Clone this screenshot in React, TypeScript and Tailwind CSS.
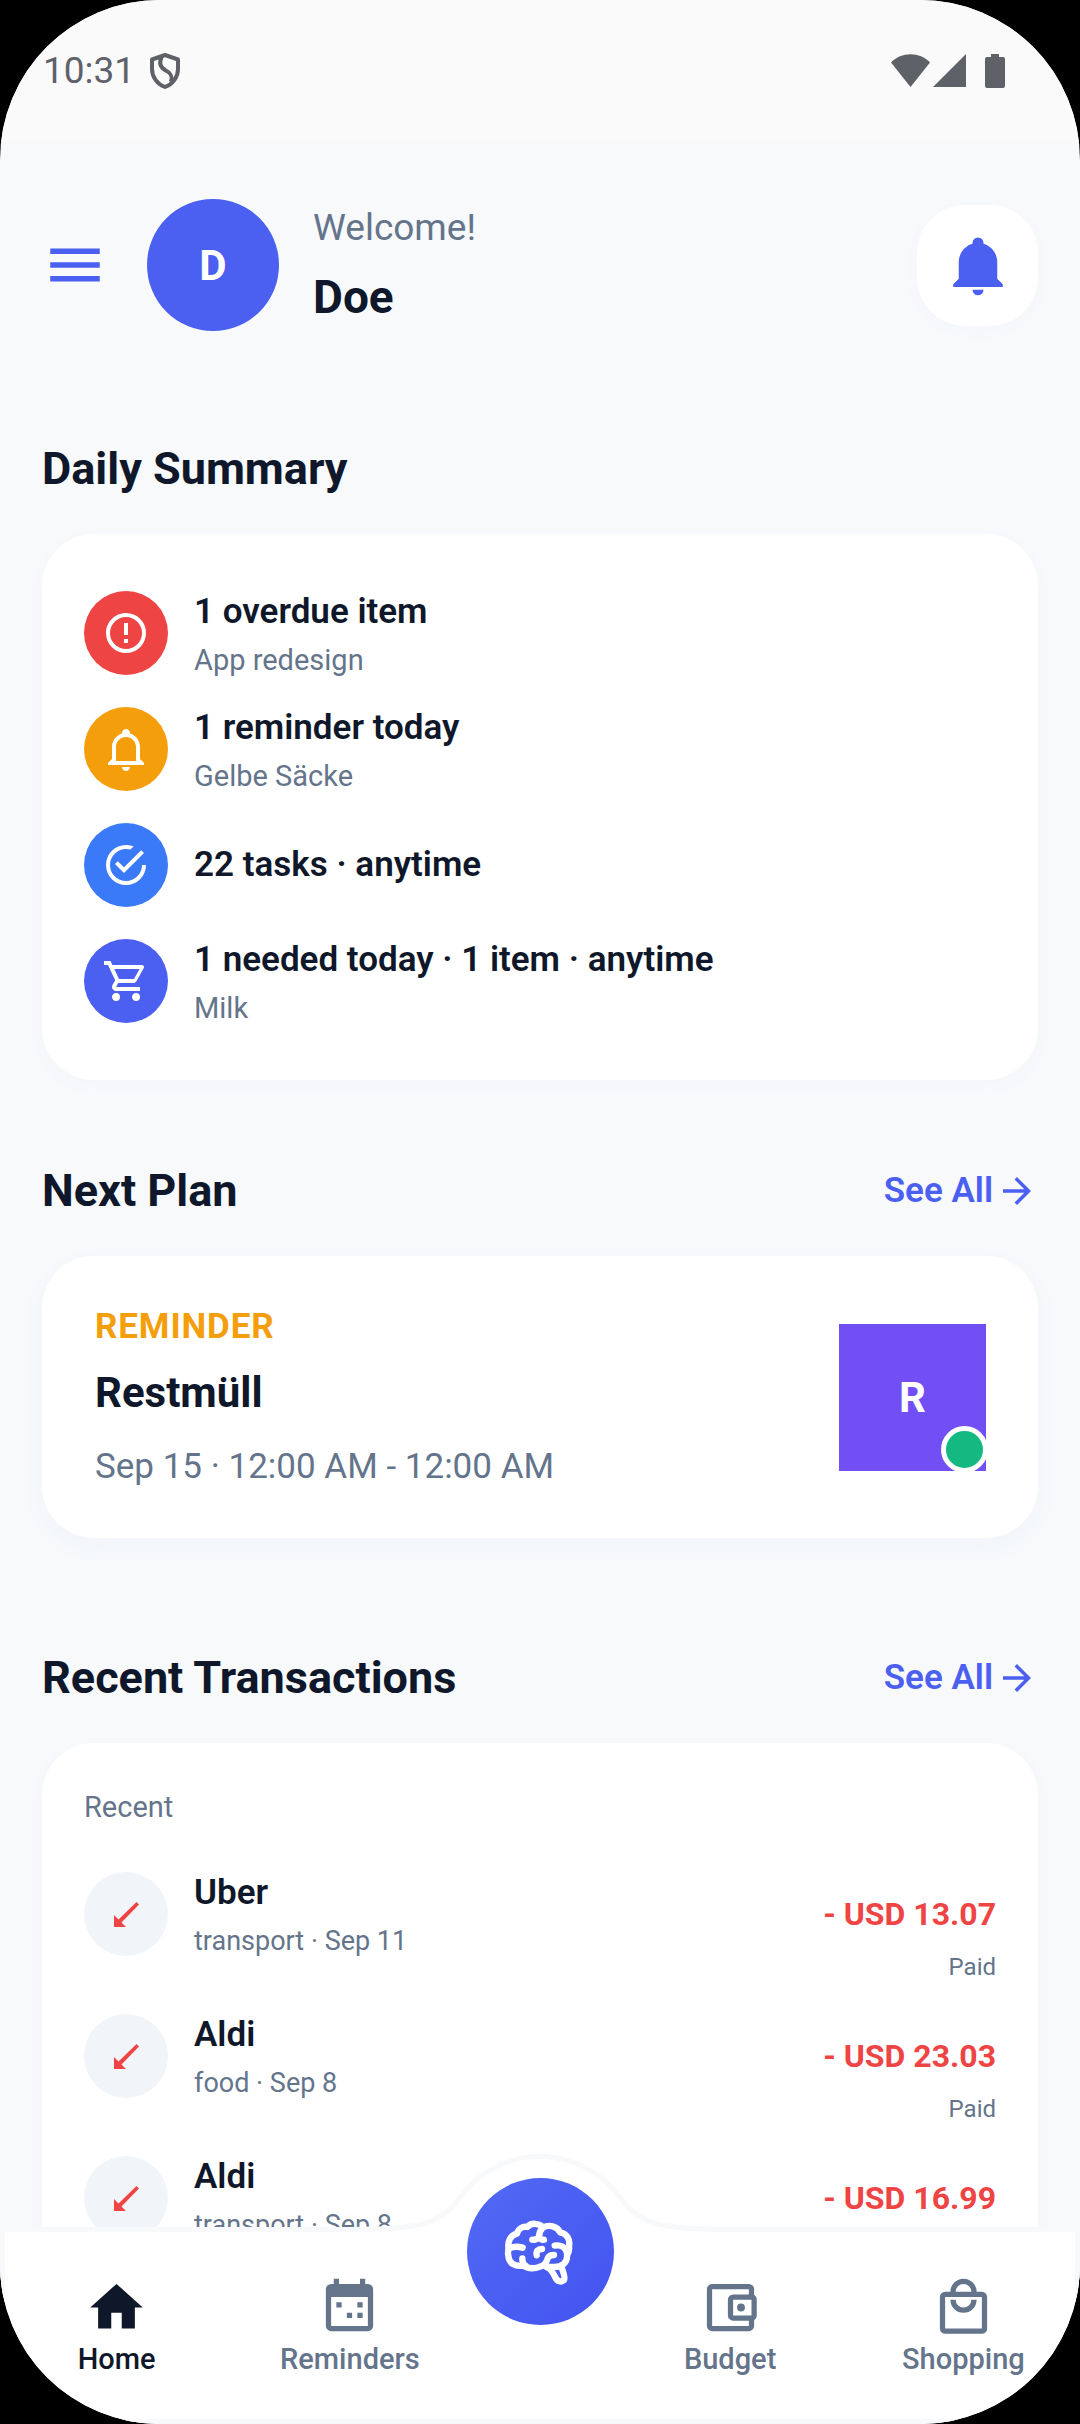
import type { ReactNode } from 'react';
import { clsx } from 'clsx';
import { MdArrowForward } from 'react-icons/md';

const ICONS = {
  menu: 'M3,6H21V8H3V6M3,11H21V13H3V11M3,16H21V18H3V16Z',
  bell: 'M21,19V20H3V19L5,17V11C5,7.9 7.03,5.17 10,4.29C10,4.19 10,4.1 10,4A2,2 0 0,1 12,2A2,2 0 0,1 14,4C14,4.1 14,4.19 14,4.29C16.97,5.17 19,7.9 19,11V17L21,19M14,21A2,2 0 0,1 12,23A2,2 0 0,1 10,21',
  bellOutline:
    'M10 21H14C14 22.1 13.1 23 12 23S10 22.1 10 21M21 19V20H3V19L5 17V11C5 7.9 7 5.2 10 4.3V4C10 2.9 10.9 2 12 2S14 2.9 14 4V4.3C17 5.2 19 7.9 19 11V17L21 19M17 11C17 8.2 14.8 6 12 6S7 8.2 7 11V18H17V11Z',
  alert:
    'M11,15H13V17H11V15M11,7H13V13H11V7M12,2C6.47,2 2,6.5 2,12A10,10 0 0,0 12,22A10,10 0 0,0 22,12A10,10 0 0,0 12,2M12,20A8,8 0 0,1 4,12A8,8 0 0,1 12,4A8,8 0 0,1 20,12A8,8 0 0,1 12,20Z',
  check:
    'M20,12A8,8 0 0,1 12,20A8,8 0 0,1 4,12A8,8 0 0,1 12,4C12.76,4 13.5,4.11 14.2,4.31L15.77,2.74C14.61,2.26 13.34,2 12,2A10,10 0 0,0 2,12A10,10 0 0,0 12,22A10,10 0 0,0 22,12M7.91,10.08L6.5,11.5L11,16L21,6L19.59,4.58L11,13.17L7.91,10.08Z',
  cart: 'M17,18A2,2 0 0,1 19,20A2,2 0 0,1 17,22C15.89,22 15,21.1 15,20C15,18.89 15.89,18 17,18M1,2H4.27L5.21,4H20A1,1 0 0,1 21,5C21,5.17 20.95,5.34 20.88,5.5L17.3,11.97C16.96,12.58 16.3,13 15.55,13H8.1L7.2,14.63L7.17,14.75A0.25,0.25 0 0,0 7.42,15H19V17H7C5.89,17 5,16.1 5,15C5,14.65 5.09,14.32 5.24,14.04L6.6,11.59L3,4H1V2M7,18A2,2 0 0,1 9,20A2,2 0 0,1 7,22C5.89,22 5,21.1 5,20C5,18.89 5.89,18 7,18M16,11L18.78,6H6.14L8.5,11H16Z',
  home: 'M10,20V14H14V20H19V12H22L12,3L2,12H5V20H10Z',
  calendar:
    'M6,1H8V3H16V1H18V3H19A2,2 0 0,1 21,5V19A2,2 0 0,1 19,21H5A2,2 0 0,1 3,19V5A2,2 0 0,1 5,3H6V1M5,8V19H19V8H5M7,10H9V12H7V10M15,10H17V12H15V10M11,14H13V16H11V14M15,14H17V16H15V14Z',
  wallet:
    'M5,3C3.89,3 3,3.9 3,5V19A2,2 0 0,0 5,21H19A2,2 0 0,0 21,19V16.72C21.59,16.37 22,15.74 22,15V9C22,8.26 21.59,7.63 21,7.28V5A2,2 0 0,0 19,3H5M5,5H19V7H13A2,2 0 0,0 11,9V15A2,2 0 0,0 13,17H19V19H5V5M13,9H20V15H13V9M16,10.5A1.5,1.5 0 0,0 14.5,12A1.5,1.5 0 0,0 16,13.5A1.5,1.5 0 0,0 17.5,12A1.5,1.5 0 0,0 16,10.5Z',
  bag: 'M19,6H17A5,5 0 0,0 7,6H5A2,2 0 0,0 3,8V20A2,2 0 0,0 5,22H19A2,2 0 0,0 21,20V8A2,2 0 0,0 19,6M12,3A3,3 0 0,1 15,6H9A3,3 0 0,1 12,3M19,20H5V8H19V20M12,12A3,3 0 0,1 9,9H7A5,5 0 0,0 17,9H15A3,3 0 0,1 12,12Z',
};

type IconName = keyof typeof ICONS;

function Icon({ name, className }: { name: IconName; className?: string }) {
  return (
    <svg viewBox="0 0 24 24" fill="currentColor" fillRule="evenodd" className={className} aria-hidden="true">
      <path d={ICONS[name]} />
    </svg>
  );
}

function BrainIcon() {
  return (
    <svg
      viewBox="0 0 252 234"
      className="w-[84px] h-[78px]"
      fill="none"
      stroke="currentColor"
      strokeWidth="19"
      strokeLinecap="round"
      strokeLinejoin="round"
      aria-hidden="true"
    >
      <path d="M32 108C27 84 39 66 57 62C61 47 74 39 88 42C99 28 124 30 135 43C153 34 178 39 186 58C206 61 217 79 213 98C215 110 212 120 207 127C209 149 192 163 166 162L146 162" />
      <path d="M32 108C30 114 29 120 31 128C32 150 50 162 76 158C90 168 114 168 128 160C142 158 146 145 150 134C154 127 161 126 168 126" />
      <path d="M134 44C126 52 123 62 123 73M103 80C110 81 118 78 122 73C126 78 132 81 138 80" />
      <path d="M34 106C44 101 60 100 74 104M73 136C72 148 76 154 84 159" />
      <path d="M116 127C113 114 121 108 132 108M170 98C188 95 202 102 206 118" />
      <path d="M148 163C160 168 165 180 172 193C178 206 190 209 198 201C203 192 196 180 190 160" />
    </svg>
  );
}

function StatusBar() {
  return (
    <div className="shrink-0 h-[142px] bg-[#fafafa] flex items-start justify-between pt-12 pl-[43px] pr-[75px] text-[#5f6168]">
      <div className="flex items-center gap-[15px]">
        <span className="text-[37px] leading-[46px]">10:31</span>
        <svg viewBox="0 0 30 36" className="w-[30px] h-9" fill="none" stroke="currentColor" strokeWidth="4" strokeLinejoin="round" aria-hidden="true">
          <path d="M15 2L28 6.500V16C28 24 23 31 15 34C7 31 2 24 2 16V6.500Z" />
          <path d="M12 3C9 9 10 14 15 17C21 20 23 23 21 29" />
        </svg>
      </div>
      <svg viewBox="0 0 114 36" className="w-[114px] h-9 mt-[5px]" fill="currentColor" aria-hidden="true">
        <path d="M19.500 34L0 9.500C10-1.500 29-1.500 39 9.500Z" />
        <path d="M42 34L75 1V34Z" />
        <path d="M100 1H108V4H112Q114 4 114 6V33Q114 35 112 35H96Q94 35 94 33V6Q94 4 96 4H100Z" />
      </svg>
    </div>
  );
}

function Header() {
  return (
    <header className="flex items-center pt-[57px]">
      <button type="button" aria-label="Open menu" className="mr-[39px] text-[#4b60f0]">
        <Icon name="menu" className="size-[66px]" />
      </button>
      <div className="size-[132px] rounded-full bg-[#4b60f0] text-white flex items-center justify-center text-[42px] font-bold">
        D
      </div>
      <div className="ml-[34px] flex-1">
        <p className="text-[37px] leading-[46px] text-[#64748b]">Welcome!</p>
        <p className="mt-[18px] text-[46px] leading-[56px] font-bold">Doe</p>
      </div>
      <button
        type="button"
        aria-label="Notifications"
        className="size-[121px] rounded-[48px] bg-white text-[#4b60f0] flex items-center justify-center shadow-[0_4px_12px_#f4f6fb]"
      >
        <Icon name="bell" className="size-[66px]" />
      </button>
    </header>
  );
}

function SectionTitle({ children, link }: { children: ReactNode; link?: boolean }) {
  return (
    <div className="flex items-center justify-between mb-[37px]">
      <h2 className="text-[45px] leading-[56px] font-bold">{children}</h2>
      {link && (
        <a href="#" className="flex items-center gap-[3px] text-[35px] leading-[46px] font-semibold text-[#4b60f0]">
          See All
          <MdArrowForward className="size-[42px]" aria-hidden="true" />
        </a>
      )}
    </div>
  );
}

const summary: { icon: IconName; color: string; title: string; sub?: string }[] = [
  { icon: 'alert', color: 'bg-[#ef4444]', title: '1 overdue item', sub: 'App redesign' },
  { icon: 'bellOutline', color: 'bg-[#f59e0b]', title: '1 reminder today', sub: 'Gelbe Säcke' },
  { icon: 'check', color: 'bg-[#3a7af8]', title: '22 tasks · anytime' },
  { icon: 'cart', color: 'bg-[#4b60f0]', title: '1 needed today · 1 item · anytime', sub: 'Milk' },
];

function DailySummary() {
  return (
    <section className="mt-[110px]">
      <SectionTitle>Daily Summary</SectionTitle>
      <ul className="bg-white rounded-[52px] px-[42px] py-14 flex flex-col gap-[30px] shadow-[0_5px_14px_#f4f6fb]">
        {summary.map((item) => (
          <li key={item.title} className="flex items-center gap-[26px] min-h-[86px]">
            <div className={clsx('size-[84px] rounded-full text-white flex items-center justify-center', item.color)}>
              <Icon name={item.icon} className="size-12" />
            </div>
            <div>
              <p className="text-[35px] leading-[44px] font-semibold">{item.title}</p>
              {item.sub && <p className="mt-2.5 text-[29px] leading-8 text-[#64748b]">{item.sub}</p>}
            </div>
          </li>
        ))}
      </ul>
    </section>
  );
}

function NextPlan() {
  return (
    <section className="mt-[83px]">
      <SectionTitle link>Next Plan</SectionTitle>
      <div className="bg-white rounded-[52px] pl-[53px] pr-[52px] py-12 flex items-center justify-between shadow-[0_8px_20px_#f1f4fa]">
        <div>
          <p className="text-[35px] leading-[46px] font-bold tracking-wide text-[#f59e0b]">REMINDER</p>
          <h3 className="mt-4 text-[42px] leading-[54px] font-bold">Restmüll</h3>
          <p className="mt-6 text-[35px] leading-[46px] text-[#64748b]">Sep 15 · 12:00 AM - 12:00 AM</p>
        </div>
        <div className="relative size-[147px] bg-[#724ff5] text-white flex items-center justify-center text-[42px] font-bold">
          R
          <span className="absolute -right-0.5 -bottom-0.5 size-[47px] rounded-full border-[5px] border-white bg-[#13b981]" />
        </div>
      </div>
    </section>
  );
}

const transactions = [
  { id: 1, name: 'Uber', detail: 'transport · Sep 11', amount: '- USD 13.07' },
  { id: 2, name: 'Aldi', detail: 'food · Sep 8', amount: '- USD 23.03' },
  { id: 3, name: 'Aldi', detail: 'transport · Sep 8', amount: '- USD 16.99' },
];

function RecentTransactions() {
  return (
    <section className="mt-28">
      <SectionTitle link>Recent Transactions</SectionTitle>
      <div className="bg-white rounded-[52px] px-[42px] py-12 shadow-[0_5px_14px_#f4f6fb]">
        <p className="text-[29px] leading-8 text-[#64748b]">Recent</p>
        <ul className="mt-12 flex flex-col gap-[30px]">
          {transactions.map((t) => (
            <li key={t.id} className="flex items-start justify-between">
              <div className="flex items-center gap-[26px]">
                <div className="size-[84px] rounded-full bg-[#f1f5f9] text-[#ef4444] flex items-center justify-center">
                  <svg viewBox="0 0 25 25" className="size-[25px]" fill="currentColor" aria-hidden="true">
                    <path d="M0 25V13L4.500 17.500L22.500 0L25 2.500L7.500 20.500L12 25Z" />
                  </svg>
                </div>
                <div>
                  <p className="text-[35px] leading-[44px] font-semibold">{t.name}</p>
                  <p className="mt-2.5 text-[27px] leading-8 text-[#64748b]">{t.detail}</p>
                </div>
              </div>
              <div className="pt-5 text-right">
                <p className="text-[32px] leading-[46px] font-bold text-[#ef4444]">{t.amount}</p>
                <p className="mt-3.5 text-[24px] leading-8 text-[#64748b]">Paid</p>
              </div>
            </li>
          ))}
        </ul>
      </div>
    </section>
  );
}

function NavItem({ icon, label, active }: { icon: IconName; label: string; active?: boolean }) {
  return (
    <a
      href="#"
      aria-current={active ? 'page' : undefined}
      className={clsx('flex-1 flex flex-col items-center', active ? 'text-[#0f172a]' : 'text-[#64748b]')}
    >
      <Icon name={icon} className="size-[63px]" />
      <span className="mt-1 text-[29px] leading-8 font-medium">{label}</span>
    </a>
  );
}

function BottomNav() {
  return (
    <nav className="relative shrink-0 h-[197px] pt-[49px] flex items-start bg-white shadow-[inset_0_0_0_5px_#f7f9fb]">
      {/* raised bump behind the assistant button */}
      <svg viewBox="0 0 380 86" className="absolute -top-[76px] left-1/2 -translate-x-1/2 w-[380px] h-[86px]" aria-hidden="true">
        <path
          d="M0 78.500C70 78.500 88 72 104 54C118 37 122 30 136 22C168 0 212 0 244 22C258 30 262 37 276 54C292 72 310 78.500 380 78.500V86H0Z"
          fill="#fff"
        />
        <path
          d="M0 78.500C70 78.500 88 72 104 54C118 37 122 30 136 22C168 0 212 0 244 22C258 30 262 37 276 54C292 72 310 78.500 380 78.500"
          fill="none"
          stroke="#f7f9fb"
          strokeWidth="5"
        />
      </svg>
      <NavItem icon="home" label="Home" active />
      <NavItem icon="calendar" label="Reminders" />
      <button
        type="button"
        aria-label="Assistant"
        className="relative -mt-[98px] size-[147px] rounded-full bg-linear-to-br from-[#5269f4] to-[#4353f0] text-white flex items-center justify-center"
      >
        <BrainIcon />
      </button>
      <NavItem icon="wallet" label="Budget" />
      <NavItem icon="bag" label="Shopping" />
    </nav>
  );
}

export default function App() {
  return (
    <div className="bg-black">
      <div className="h-screen overflow-hidden rounded-[160px] bg-[#f7f9fb] flex flex-col font-['Roboto',sans-serif] text-[#0f172a]">
        <StatusBar />
        <main className="flex-1 min-h-0 overflow-y-auto [scrollbar-width:none] px-[42px]">
          <Header />
          <DailySummary />
          <NextPlan />
          <RecentTransactions />
        </main>
        <BottomNav />
      </div>
    </div>
  );
}
